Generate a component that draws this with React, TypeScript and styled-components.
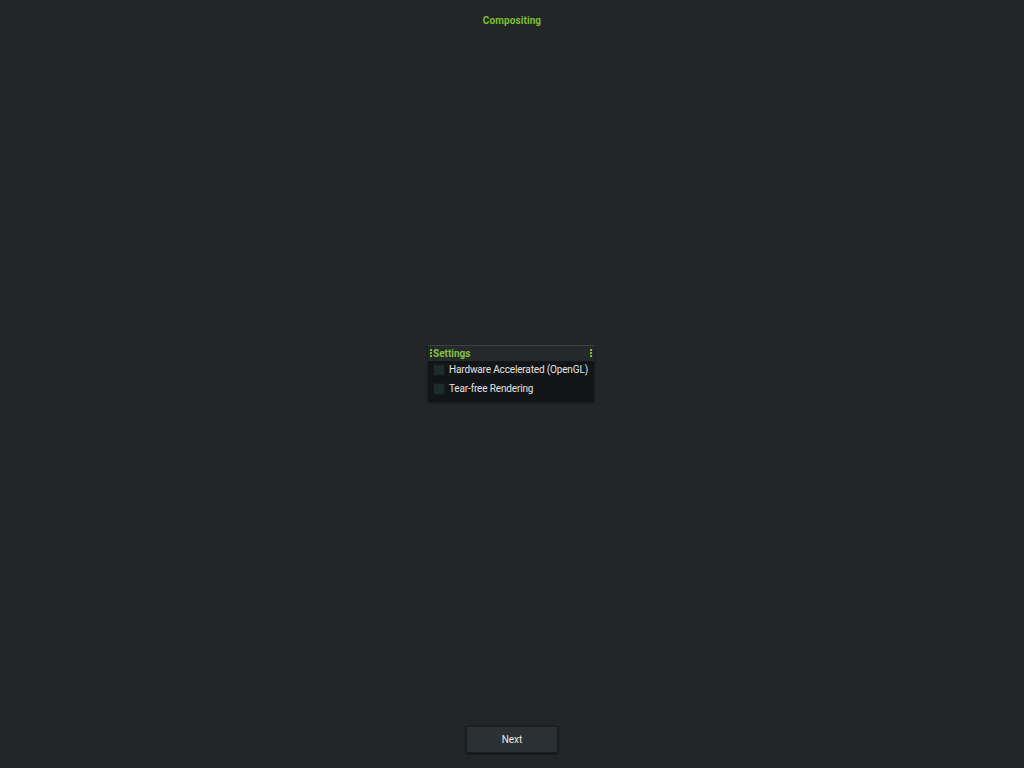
import styled, { createGlobalStyle } from "styled-components";

const GlobalStyle = createGlobalStyle`
  html, body {
    margin: 0;
    padding: 0;
    height: 100%;
    background: #222629;
  }
  #root {
    height: 100%;
  }
`;

const Screen = styled.div`
  height: 768px;
  display: flex;
  flex-direction: column;
  align-items: center;
  font-family: "Roboto", "Liberation Sans", sans-serif;
  color: #e6e6e6;
  background: #222629;
`;

const Title = styled.div`
  margin-top: 14px;
  height: 14px;
  font-size: 10px;
  font-weight: bold;
  color: #7fbf2a;
  line-height: 14px;
  letter-spacing: 0.1px;
`;

const Middle = styled.div`
  flex: 1;
  display: flex;
  align-items: center;
  justify-content: center;
  padding: 0 2px 8px 0;
`;

const Panel = styled.div`
  width: 166px;
  background: #121517;
  box-shadow: 0 1px 2px rgba(0, 0, 0, 0.5);
`;

const PanelHeader = styled.div`
  height: 15px;
  display: flex;
  align-items: center;
  justify-content: space-between;
  background: #24292c;
  border-top: 1px solid #3e4448;
  padding: 0 2px;
`;

const HeaderLabel = styled.div`
  display: flex;
  align-items: center;
  gap: 1px;
  font-size: 10px;
  font-weight: bold;
  color: #84c13a;
`;

const Grip = styled.span`
  display: flex;
  flex-direction: column;
  gap: 1px;
  & > i {
    width: 2px;
    height: 2px;
    background: #7fbf2a;
  }
`;

const Rows = styled.div`
  display: flex;
  flex-direction: column;
  gap: 7px;
  padding: 3px 5px 7px 5px;
`;

const Row = styled.label`
  display: flex;
  align-items: center;
  gap: 4px;
  font-size: 10px;
  letter-spacing: -0.15px;
  color: #e4e4e4;
  height: 12px;
  white-space: nowrap;
`;

const Box = styled.span`
  flex: none;
  width: 12px;
  height: 12px;
  background: #1f2b2b;
  box-shadow: inset 0 0 0 1px #161c1d;
`;

const Footer = styled.div`
  height: 42px;
  display: flex;
  justify-content: center;
  align-items: flex-start;
`;

const NextButton = styled.button`
  width: 92px;
  height: 27px;
  background: #2a3033;
  border: 1px solid #1a1e20;
  box-shadow: 0 1px 2px rgba(0, 0, 0, 0.6);
  color: #e8e8e8;
  font-family: "Roboto", "Liberation Sans", sans-serif;
  font-size: 10px;
  padding: 0;
`;

function GripDots() {
  return (
    <Grip>
      <i />
      <i />
      <i />
    </Grip>
  );
}

export default function App() {
  return (
    <>
      <GlobalStyle />
      <Screen>
        <Title>Compositing</Title>
        <Middle>
          <Panel>
            <PanelHeader>
              <HeaderLabel>
                <GripDots />
                Settings
              </HeaderLabel>
              <GripDots />
            </PanelHeader>
            <Rows>
              <Row>
                <Box />
                Hardware Accelerated (OpenGL)
              </Row>
              <Row>
                <Box />
                Tear-free Rendering
              </Row>
            </Rows>
          </Panel>
        </Middle>
        <Footer>
          <NextButton>Next</NextButton>
        </Footer>
      </Screen>
    </>
  );
}
